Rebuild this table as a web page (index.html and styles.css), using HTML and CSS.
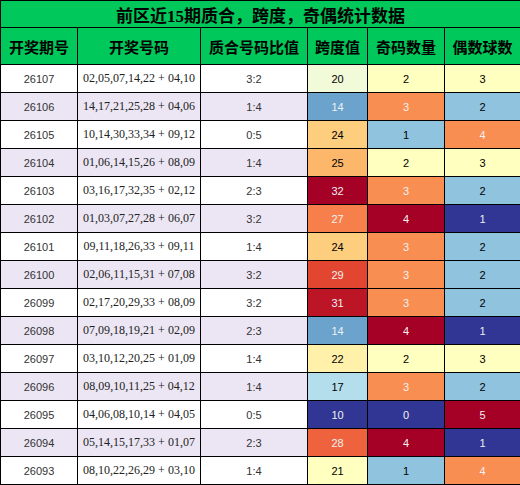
FILE: index.html
```html
<!DOCTYPE html>
<html lang="zh">
<head>
  <meta charset="UTF-8" />
  <title>前区近15期质合，跨度，奇偶统计数据</title>
  <link rel="stylesheet" href="styles.css">
</head>
<body>
  <table class="stats">
    <colgroup>
      <col class="c-issue"><col class="c-nums"><col class="c-ratio">
      <col class="c-span"><col class="c-odd"><col class="c-even">
    </colgroup>
    <thead>
      <tr class="title-row"><th colspan="6">前区近15期质合，跨度，奇偶统计数据</th></tr>
      <tr class="head-row">
        <th>开奖期号</th><th>开奖号码</th><th>质合号码比值</th>
        <th>跨度值</th><th>奇码数量</th><th>偶数球数</th>
      </tr>
    </thead>
    <tbody id="rows"></tbody>
  </table>

  <script>
    const data = [
      ['26107', '02,05,07,14,22 + 04,10', '3:2', 20, 2, 3],
      ['26106', '14,17,21,25,28 + 04,06', '1:4', 14, 3, 2],
      ['26105', '10,14,30,33,34 + 09,12', '0:5', 24, 1, 4],
      ['26104', '01,06,14,15,26 + 08,09', '1:4', 25, 2, 3],
      ['26103', '03,16,17,32,35 + 02,12', '2:3', 32, 3, 2],
      ['26102', '01,03,07,27,28 + 06,07', '3:2', 27, 4, 1],
      ['26101', '09,11,18,26,33 + 09,11', '1:4', 24, 3, 2],
      ['26100', '02,06,11,15,31 + 07,08', '3:2', 29, 3, 2],
      ['26099', '02,17,20,29,33 + 08,09', '3:2', 31, 3, 2],
      ['26098', '07,09,18,19,21 + 02,09', '2:3', 14, 4, 1],
      ['26097', '03,10,12,20,25 + 01,09', '1:4', 22, 2, 3],
      ['26096', '08,09,10,11,25 + 04,12', '1:4', 17, 3, 2],
      ['26095', '04,06,08,10,14 + 04,05', '0:5', 10, 0, 5],
      ['26094', '05,14,15,17,33 + 01,07', '2:3', 28, 4, 1],
      ['26093', '08,10,22,26,29 + 03,10', '1:4', 21, 1, 4]
    ];

    // RdYlBu, reversed so big values are red
    const stops = ['#313695', '#4575b4', '#74add1', '#abd9e9', '#e0f3f8', '#ffffbf',
                   '#fee090', '#fdae61', '#f46d43', '#d73027', '#a50026'];

    function hex(c) {
      return [1, 3, 5].map(i => parseInt(c.substr(i, 2), 16));
    }

    function colorAt(t) {
      const pos = t * (stops.length - 1);
      const i = Math.min(Math.floor(pos), stops.length - 2);
      const f = pos - i;
      const a = hex(stops[i]), b = hex(stops[i + 1]);
      return a.map((v, k) => Math.round(v + (b[k] - v) * f));
    }

    function luminance(rgb) {
      const lin = rgb.map(v => {
        v = v / 255;
        return v <= 0.03928 ? v / 12.92 : Math.pow((v + 0.055) / 1.055, 2.4);
      });
      return 0.2126 * lin[0] + 0.7152 * lin[1] + 0.0722 * lin[2];
    }

    const ranges = [3, 4, 5].map(col => {
      const vals = data.map(r => r[col]);
      return [Math.min(...vals), Math.max(...vals)];
    });

    const tbody = document.getElementById('rows');
    data.forEach(row => {
      const tr = document.createElement('tr');
      row.forEach((val, col) => {
        const td = document.createElement('td');
        td.textContent = val;
        if (col === 1) td.className = 'nums';
        if (col >= 3) {
          const [lo, hi] = ranges[col - 3];
          const rgb = colorAt((val - lo) / (hi - lo));
          td.className = 'heat';
          td.style.background = 'rgb(' + rgb.join(',') + ')';
          td.style.color = luminance(rgb) < 0.408 ? '#f1f1f1' : '#000000';
        }
        tr.appendChild(td);
      });
      tbody.appendChild(tr);
    });
  </script>
</body>
</html>
```

FILE: styles.css
```css
body {
  margin: 0;
  background: #ffffff;
}

.stats {
  width: 520px;
  border-collapse: collapse;
  table-layout: fixed;
  font-family: "Liberation Sans", "Noto Sans CJK SC", sans-serif;
}

.c-issue { width: 77px; }
.c-nums  { width: 123px; }
.c-ratio { width: 107px; }
.c-span  { width: 60px; }
.c-odd   { width: 77px; }
.c-even  { width: 76px; }

.stats th,
.stats td {
  border: 1px solid #000000;
  padding: 0;
  text-align: center;
}

.stats th {
  background: #00c85a;
  color: #000000;
}

.title-row th {
  height: 26px;
  font-family: "Liberation Serif", "Noto Sans CJK SC", serif;
  font-size: 17px;
  font-weight: bold;
}

.head-row th {
  height: 36px;
  font-family: "Noto Sans CJK SC", sans-serif;
  font-size: 15px;
  font-weight: bold;
}

.stats td {
  height: 27px;
  font-size: 11px;
  color: #333333;
}

.stats tbody tr:nth-child(even) td {
  background: #ece6f4;
}

.stats td.nums {
  font-family: "Liberation Serif", serif;
  font-size: 12px;
  color: #222222;
}
```
